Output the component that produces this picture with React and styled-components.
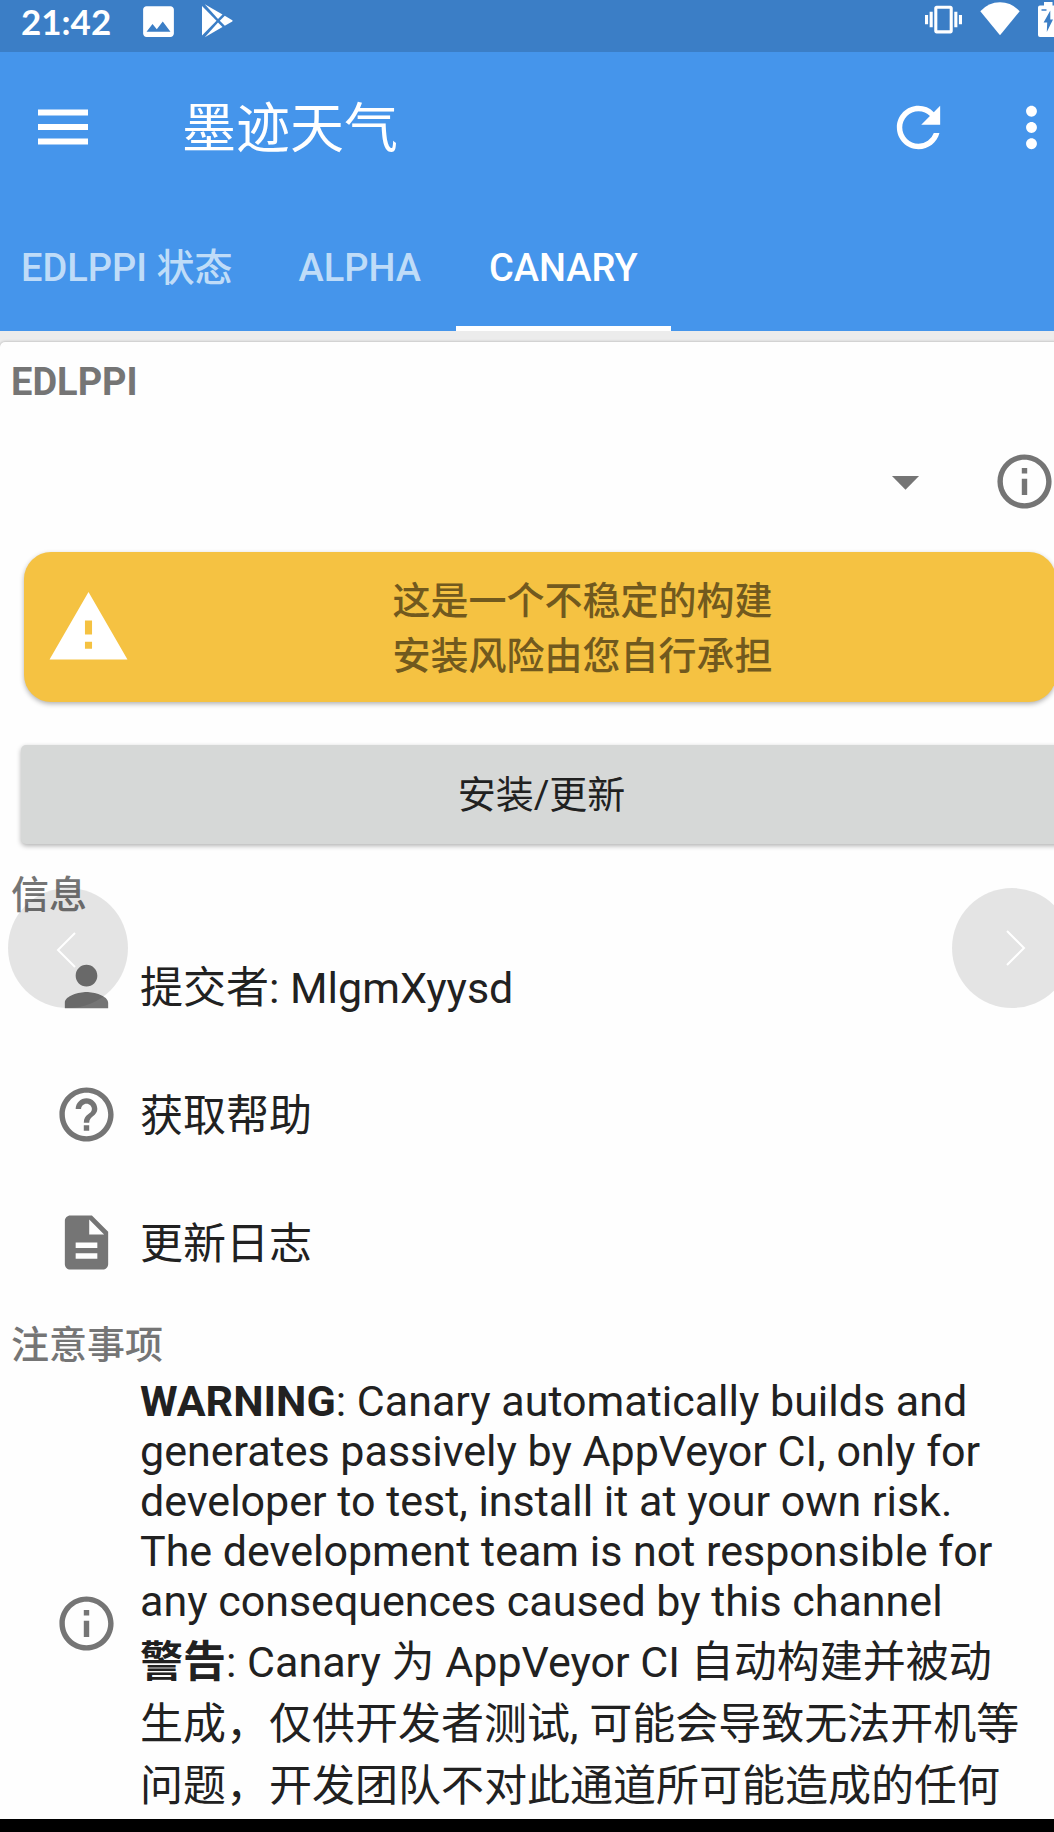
import React from "react";
import styled, { createGlobalStyle } from "styled-components";
import {
  MdRefresh,
  MdMoreVert,
  MdArrowDropDown,
  MdInfoOutline,
  MdWarning,
  MdPerson,
  MdHelpOutline,
  MdVibration,
  MdImage,
} from "react-icons/md";

const GlobalStyle = createGlobalStyle`
  * { box-sizing: border-box; }
  body {
    margin: 0;
    background: #000;
    font-family: Roboto, "Noto Sans CJK SC", sans-serif;
    color: #212121;
  }
  button {
    font: inherit;
    color: inherit;
    border: 0;
    padding: 0;
    background: none;
    cursor: pointer;
  }
  svg { display: block; flex: none; }
`;

const Screen = styled.div`
  position: relative;
  display: flex;
  flex-direction: column;
  height: 100vh;
  overflow: hidden;
  background: #ececec;
`;

const StatusBar = styled.div`
  display: flex;
  justify-content: space-between;
  height: 52px;
  flex: none;
  overflow: hidden;
  background: #3b7ec6;
  color: #fff;
`;

const StatusGroup = styled.div`
  display: flex;
  align-items: center;
  height: ${(p) => p.$height}px;
  gap: ${(p) => p.$gap}px;
  margin-left: ${(p) => p.$start || 0}px;
  margin-right: ${(p) => p.$end || 0}px;
`;

const Clock = styled.time`
  margin-right: 4px;
  font-family: Lato, sans-serif;
  font-weight: 700;
  font-size: 35px;
  line-height: 42px;
`;

const AppBar = styled.header`
  flex: none;
  background: #4595eb;
  color: #fff;
`;

const Toolbar = styled.div`
  display: flex;
  align-items: center;
  height: 150px;
  padding-left: 38px;
  margin-right: -10px;
`;

const Title = styled.h1`
  flex: 1;
  margin: 0 0 0 94px;
  padding-top: 5px;
  font-size: 54px;
  font-weight: 400;
  line-height: 78px;
`;

const ToolbarActions = styled.div`
  display: flex;
  gap: 48px;
`;

const Tabs = styled.nav`
  display: flex;
  height: 129px;
`;

const Tab = styled.button`
  padding: 8px 33px ${(p) => (p.$active ? 0 : 5)}px;
  font-size: 38px;
  font-weight: 500;
  line-height: 56px;
  white-space: nowrap;
  border-bottom: ${(p) => (p.$active ? "5px solid #fff" : "0")};
  color: ${(p) => (p.$active ? "#fff" : "#bfdcf8")};

  &:first-child { padding-left: 21px; }
  &:last-child { margin-left: 2px; }
`;

const Card = styled.main`
  flex: 1;
  min-height: 0;
  overflow: hidden;
  margin: 11px -8px 0 0;
  padding-top: 13px;
  background: #fefefe;
  border-radius: 5px 0 0 0;
  box-shadow: 0 0 3px rgba(0, 0, 0, 0.3);
`;

const SectionTitle = styled.h2`
  margin: ${(p) => p.$top || 0}px 0 0 11px;
  font-size: 38px;
  font-weight: ${(p) => p.$weight || 500};
  line-height: 54px;
  color: #757575;
`;

const PickerRow = styled.div`
  display: flex;
  align-items: center;
  gap: 54px;
  height: 143px;
  padding: 1px 5px 0 12px;
  color: #757575;
`;

const Picker = styled.label`
  flex: 1;
  display: grid;
  align-items: center;

  > * { grid-area: 1 / 1; }
  > svg { justify-self: end; pointer-events: none; }
`;

const Select = styled.select`
  appearance: none;
  width: 100%;
  height: 96px;
  border: 0;
  background: transparent;
  font: inherit;
  font-size: 43px;
`;

const Banner = styled.div`
  display: flex;
  align-items: center;
  height: 150px;
  margin: 0 6px 0 24px;
  padding: 0 22px;
  border-radius: 27px;
  background: #f5c242;
  color: #fff;
  box-shadow: 0 2px 5px rgba(0, 0, 0, 0.3);
`;

const BannerText = styled.p`
  flex: 1;
  margin: 0;
  padding-top: 3px;
  text-align: center;
  font-size: 38px;
  font-weight: 500;
  line-height: 55px;
  color: #71591e;
`;

const InstallButton = styled.button`
  && {
    display: block;
    width: calc(100% - 21px);
    height: 99px;
    margin: 43px 0 0 21px;
    padding-top: 1px;
    border-radius: 5px;
    background: #d6d8d7;
    font-size: 38px;
    line-height: 55px;
    box-shadow: 0 2px 5px rgba(0, 0, 0, 0.3);
  }
`;

const Rows = styled.ul`
  list-style: none;
  margin: 0;
  padding: 0;
`;

const Row = styled.li`
  display: flex;
  align-items: center;
  gap: 21px;
  min-height: 128px;
  padding: 0 38px 0 54px;
  font-size: 43px;
  line-height: 62px;

  > svg { color: #757575; }
`;

const RowText = styled.span`
  padding-top: 3px;
`;

const Notice = styled(Row).attrs({ as: "section" })`
  margin-top: 4px;
`;

const NoticeText = styled.div`
  flex: 1;
  padding-bottom: 54px;
`;

const Paragraph = styled.p`
  margin: 0;
  line-height: ${(p) => p.$line}px;

  & + & { margin-top: 5px; }
`;

const PageButton = styled.button`
  && {
    position: absolute;
    top: 888px;
    ${(p) => (p.$side === "left" ? "left: 8px;" : "right: -18px;")}
    display: grid;
    place-items: center;
    width: 120px;
    height: 120px;
    border-radius: 50%;
    background: rgba(0, 0, 0, 0.1);
  }
`;

const SystemBar = styled.div`
  flex: none;
  height: 13px;
  background: #000;
`;

const MenuIcon = () => (
  <svg width="50" height="36" viewBox="0 0 50 36" fill="currentColor">
    <rect width="50" height="6" y="0.5" />
    <rect width="50" height="6" y="15" />
    <rect width="50" height="6" y="29.5" />
  </svg>
);

const PlayIcon = () => (
  <svg width="31" height="34" viewBox="0 0 31 34" fill="currentColor">
    <path d="M0 2 L0 31.5 L14.5 16.8 Z" />
    <path d="M2.8 0.3 L20.5 10.5 L16 15 Z" />
    <path d="M2.8 33.3 L20.5 23.1 L16 18.6 Z" />
    <path d="M17.8 16.8 L22.8 11.8 L30.3 16.2 Q31 16.8 30.3 17.4 L22.8 21.8 Z" />
  </svg>
);

const WifiIcon = () => (
  <svg width="40" height="34" viewBox="0 0 40 34" fill="currentColor">
    <path d="M0.3 9.3 Q8.5 0.3 20 0.3 Q31.5 0.3 39.7 9.3 L20 33.3 Z" />
  </svg>
);

const BatteryIcon = () => (
  <svg width="20" height="35" viewBox="0 0 20 35" fill="currentColor">
    <path
      fillRule="evenodd"
      d="M6 0h8.5v3.5H18a2 2 0 0 1 2 2V33a2 2 0 0 1-2 2H2a2 2 0 0 1-2-2V5.500a2 2 0 0 1 2-2H6zM12.300 8.500L5.600 20.500H9.200L8.800 30L15 17.500H12.300z"
    />
    <path d="M3.500 8H8.500M16 8H17.500" stroke="#3b7ec6" strokeWidth="1.500" />
  </svg>
);

const DocumentIcon = () => (
  <svg width="65" height="65" viewBox="0 0 24 24" fill="currentColor">
    <path d="M14 2H6c-1.100 0-1.990.9-1.990 2L4 20c0 1.100.890 2 1.990 2H18c1.100 0 2-.9 2-2V8l-6-6zm2 16H8v-2h8v2zm0-4H8v-2h8v2zm-3-5V3.500L18.500 9H13z" />
  </svg>
);

const Chevron = ({ left }) => (
  <svg width="20" height="36" viewBox="0 0 20 36" fill="none" stroke="#fff" strokeWidth="2">
    <path d={left ? "M19 1 L2 18 L19 35" : "M1 1 L18 18 L1 35"} />
  </svg>
);

const ChevronSlot = styled.span`
  padding: ${(p) => (p.$side === "left" ? "4px 4px 0 0" : "0 0 0 8px")};
`;

const tabs = ["EDLPPI 状态", "ALPHA", "CANARY"];

const infoRows = [
  { icon: <MdPerson size={65} />, text: "提交者: MlgmXyysd" },
  { icon: <MdHelpOutline size={65} />, text: "获取帮助" },
  { icon: <DocumentIcon />, text: "更新日志" },
];

export default function App() {
  return (
    <>
      <GlobalStyle />
      <Screen>
        <StatusBar>
          <StatusGroup $height={42} $gap={23} $start={21}>
            <Clock>21:42</Clock>
            <MdImage size={41} />
            <PlayIcon />
          </StatusGroup>
          <StatusGroup $height={38} $gap={18} $end={-4}>
            <MdVibration size={37} />
            <WifiIcon />
            <BatteryIcon />
          </StatusGroup>
        </StatusBar>

        <AppBar>
          <Toolbar>
            <button aria-label="菜单">
              <MenuIcon />
            </button>
            <Title>墨迹天气</Title>
            <ToolbarActions>
              <button aria-label="刷新">
                <MdRefresh size={65} />
              </button>
              <button aria-label="更多">
                <MdMoreVert size={65} />
              </button>
            </ToolbarActions>
          </Toolbar>
          <Tabs>
            {tabs.map((name) => (
              <Tab key={name} $active={name === "CANARY"}>
                {name}
              </Tab>
            ))}
          </Tabs>
        </AppBar>

        <Card>
          <SectionTitle $weight={700}>EDLPPI</SectionTitle>
          <PickerRow>
            <Picker>
              <Select aria-label="EDLPPI" defaultValue="">
                <option value=""></option>
              </Select>
              <MdArrowDropDown size={65} />
            </Picker>
            <button aria-label="说明">
              <MdInfoOutline size={65} />
            </button>
          </PickerRow>

          <Banner role="alert">
            <MdWarning size={85} />
            <BannerText>
              这是一个不稳定的构建
              <br />
              安装风险由您自行承担
            </BannerText>
          </Banner>

          <InstallButton>安装/更新</InstallButton>

          <SectionTitle $top={24}>信息</SectionTitle>
          <Rows>
            {infoRows.map((row) => (
              <Row key={row.text}>
                {row.icon}
                <RowText>{row.text}</RowText>
              </Row>
            ))}
          </Rows>

          <SectionTitle $top={12}>注意事项</SectionTitle>
          <Notice>
            <MdInfoOutline size={65} />
            <NoticeText>
              <Paragraph $line={50}>
                <b>WARNING</b>: Canary automatically builds and generates passively by AppVeyor CI,
                only for developer to test, install it at your own risk. The development team is not
                responsible for any consequences caused by this channel
              </Paragraph>
              <Paragraph $line={62}>
                <b>警告</b>: Canary 为 AppVeyor CI 自动构建并被动生成，仅供开发者测试,
                可能会导致无法开机等问题，开发团队不对此通道所可能造成的任何
              </Paragraph>
            </NoticeText>
          </Notice>
        </Card>

        <SystemBar />

        <PageButton $side="left" aria-label="上一张">
          <ChevronSlot $side="left">
            <Chevron left />
          </ChevronSlot>
        </PageButton>
        <PageButton $side="right" aria-label="下一张">
          <ChevronSlot $side="right">
            <Chevron />
          </ChevronSlot>
        </PageButton>
      </Screen>
    </>
  );
}
